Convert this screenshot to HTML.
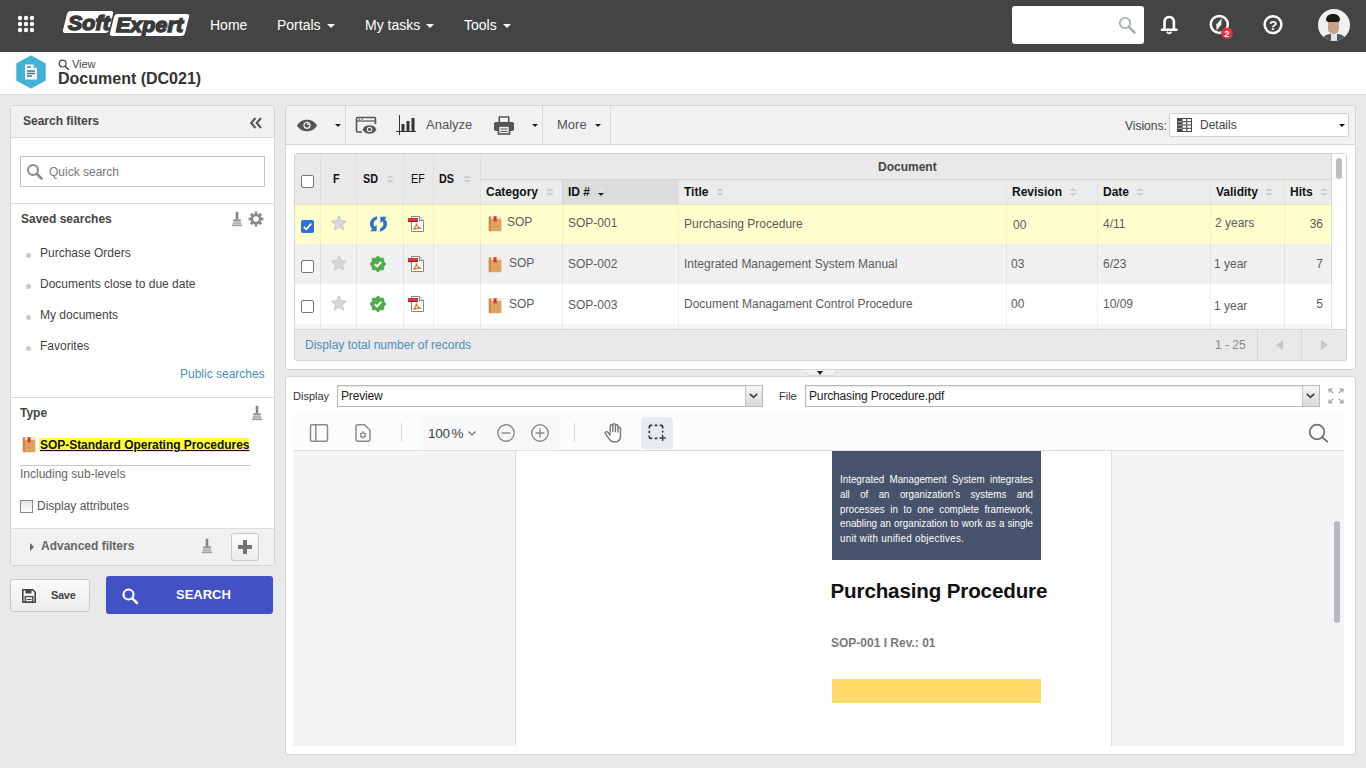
<!DOCTYPE html>
<html lang="en">
<head>
<meta charset="utf-8">
<title>Document (DC021)</title>
<style>
*{box-sizing:border-box;margin:0;padding:0}
html,body{width:1366px;height:768px;overflow:hidden}
body{background:#e9e9e9;font-family:"Liberation Sans",Arial,sans-serif;font-size:12px;color:#444;position:relative}
.abs{position:absolute}
.t{position:absolute;white-space:nowrap;line-height:1}
/* navbar */
#nav{position:absolute;left:0;top:0;width:1366px;height:52px;background:#444}
#nav .m{position:absolute;top:17px;color:#fff;font-size:14px;line-height:17px;white-space:nowrap}
.caret{display:inline-block;width:0;height:0;border-left:4px solid transparent;border-right:4px solid transparent;border-top:4px solid #fff;vertical-align:middle;margin-left:6px;position:relative;top:0px}
#hdr{position:absolute;left:0;top:52px;width:1366px;height:43px;background:#fff;border-bottom:1px solid #ddd}
/* panels */
.panel{position:absolute;background:#fff;border:1px solid #d4d4d4;border-radius:3px}
.hbar{position:absolute;background:#f1f1f1}
.b{font-weight:bold}
.lg{font-size:20px;line-height:22px;font-weight:bold;font-style:italic;color:#3a3a3a;letter-spacing:0.2px;-webkit-text-stroke:1.5px #3a3a3a;paint-order:stroke fill;transform-origin:0 50%;transform:scaleX(1.06)}
.pj{width:220.6px;font-size:11.2px;transform-origin:0 0;transform:scaleX(0.875);line-height:15px;color:#fff;text-align:justify;text-align-last:justify;white-space:nowrap}
.cd{width:0;height:0;border-left:3px solid transparent;border-right:3px solid transparent;border-top:3.5px solid #222}
.su{width:0;height:0;border-left:4px solid transparent;border-right:4px solid transparent;border-bottom:3.5px solid #cdcdcd}
.sd{width:0;height:0;border-left:4px solid transparent;border-right:4px solid transparent;border-top:3.5px solid #cdcdcd}
.cb{width:13px;height:13px;border:1px solid #767676;border-radius:2px;background:#fff}
.hd{font-size:12px;color:#111}
.nr{transform-origin:0 50%;transform:scaleX(0.9)}
.rt{font-size:12px;color:#5c5c5c}
.dot{width:5px;height:5px;margin:-0.5px 0 0 -0.5px;border-radius:50%;background:#c8c8c8}
</style>
</head>
<body>
<!-- NAVBAR -->
<div id="nav">
  <svg class="abs" style="left:17px;top:15px" width="18" height="18" viewBox="0 0 18 18">
    <g fill="#fff"><circle cx="3" cy="3" r="2.2"/><circle cx="9" cy="3" r="2.2"/><circle cx="15" cy="3" r="2.2"/><circle cx="3" cy="9" r="2.2"/><circle cx="9" cy="9" r="2.2"/><circle cx="15" cy="9" r="2.2"/><circle cx="3" cy="15" r="2.2"/><circle cx="9" cy="15" r="2.2"/><circle cx="15" cy="15" r="2.2"/></g>
  </svg>
  <!-- logo -->
  <div class="abs" style="left:65px;top:11px;width:46px;height:22px;background:#fff;border-radius:3px;transform:skewX(-14deg)"></div>
  <div class="abs" style="left:112px;top:14px;width:75px;height:22px;background:#fff;border-radius:3px;transform:skewX(-14deg)"></div>
  <div class="t lg" style="left:68px;top:12px">Soft</div>
  <div class="t lg" style="left:116px;top:14px">Expert</div>
  <div class="m" style="left:210px">Home</div>
  <div class="m" style="left:277px">Portals<span class="caret"></span></div>
  <div class="m" style="left:365px">My tasks<span class="caret"></span></div>
  <div class="m" style="left:464px">Tools<span class="caret"></span></div>
  <!-- search -->
  <div class="abs" style="left:1012px;top:6px;width:132px;height:38px;background:#fff;border-radius:3px"></div>
  <svg class="abs" style="left:1117px;top:15px" width="20" height="20" viewBox="0 0 20 20"><circle cx="8" cy="8" r="5.2" fill="none" stroke="#a9b2b0" stroke-width="1.8"/><path d="M12 12 L17.5 17.5" stroke="#a9b2b0" stroke-width="2.6" stroke-linecap="round"/></svg>
  <!-- bell -->
  <svg class="abs" style="left:1158px;top:13px" width="22" height="24" viewBox="0 0 22 24"><path d="M6.5 16.5 V9.6 C6.5 6 8.3 4 11.2 4 C14.1 4 15.9 6 15.9 9.6 V16.5" fill="none" stroke="#fff" stroke-width="2.6"/><path d="M3.9 16.7 H18.5" stroke="#fff" stroke-width="2.5" stroke-linecap="round"/><path d="M8.9 18.8 Q11.2 22 13.5 18.8" fill="none" stroke="#fff" stroke-width="1.9"/></svg>
  <!-- compass -->
  <svg class="abs" style="left:1207px;top:13px" width="30" height="30" viewBox="0 0 30 30"><circle cx="12.3" cy="11.4" r="8.5" fill="none" stroke="#fff" stroke-width="2.5"/><path d="M15 5.2 L9.3 11.6 L9.6 17.6 L14 12 Z" fill="#fff"/><path d="M15 5.2 L14 12 L9.6 17.6 L15.2 11.8 Z" fill="#777"/><circle cx="20" cy="20.3" r="5.9" fill="#e0343c"/></svg>
  <div class="t" style="left:1223px;top:28.5px;font-size:9.5px;font-weight:bold;color:#fff;width:8px;text-align:center">2</div>
  <!-- help -->
  <svg class="abs" style="left:1261px;top:13px" width="24" height="24" viewBox="0 0 24 24"><circle cx="12" cy="11.6" r="8.4" fill="none" stroke="#fff" stroke-width="2.5"/></svg>
  <div class="t" style="left:1268px;top:18.5px;font-size:13.5px;font-weight:bold;color:#fff;width:10px;text-align:center">?</div>
  <!-- avatar -->
  <div class="abs" style="left:1318px;top:9px;width:32px;height:32px;border-radius:50%;background:#f0f0f0;overflow:hidden">
    <div class="abs" style="left:3px;top:25px;width:26px;height:12px;background:#4e555a;border-radius:9px 9px 0 0"></div>
    <div class="abs" style="left:13px;top:24px;width:6px;height:9px;background:#e6e6e6"></div>
    <div class="abs" style="left:10px;top:8px;width:11px;height:17px;background:#c9a088;border-radius:5px 5px 6px 6px"></div>
    <div class="abs" style="left:8px;top:4.5px;width:14px;height:8px;background:#1c1917;border-radius:7px 7px 3px 3px"></div>
  </div>
</div>

<!-- HEADER -->
<div id="hdr"></div>
<svg class="abs" style="left:14.4px;top:54.4px" width="34" height="36" viewBox="0 0 34 36"><path d="M17 2.8 L30.4 10.2 L30.4 25.8 L17 33.2 L3.6 25.8 L3.6 10.2 Z" fill="#43b1d5" stroke="#43b1d5" stroke-width="2.6" stroke-linejoin="round"/><path d="M11 10.5 H19.5 L23 14 V25.5 H11 Z" fill="#fff"/><path d="M19.5 10.5 V14 H23 Z" fill="#43b1d5"/><path d="M13 17 H21 M13 19.5 H21 M13 22 H18" stroke="#3b6f8c" stroke-width="1.3"/><path d="M13 13 H17" stroke="#3b6f8c" stroke-width="1.3"/></svg>
<svg class="abs" style="left:58px;top:59px" width="12" height="12" viewBox="0 0 12 12"><circle cx="4.6" cy="4.6" r="3.4" fill="none" stroke="#444" stroke-width="1.2"/><path d="M7.2 7.2 L10.8 10.8" stroke="#444" stroke-width="1.4"/></svg>
<div class="t" style="left:72px;top:59px;font-size:11px;color:#484848;letter-spacing:-0.1px">View</div>
<div class="t b" style="left:58px;top:71px;font-size:16px;color:#333">Document (DC021)</div>

<!-- LEFT PANEL -->

<div class="panel" style="left:10px;top:105px;width:265px;height:461px"></div>
<div class="hbar" style="left:11px;top:106px;width:263px;height:32px;border-bottom:1px solid #d9d9d9;border-radius:3px 3px 0 0"></div>
<div class="t b" style="left:23px;top:115px;font-size:12px;color:#444">Search filters</div>
<svg class="abs" style="left:249px;top:117px" width="14" height="12" viewBox="0 0 14 12"><path d="M6.5 1 L2.2 6 L6.5 11 M12 1 L7.7 6 L12 11" fill="none" stroke="#555" stroke-width="2.1"/></svg>
<!-- quick search -->
<div class="abs" style="left:20px;top:156px;width:245px;height:31px;border:1px solid #c4c4c4;background:#fff"></div>
<svg class="abs" style="left:26px;top:163px" width="18" height="18" viewBox="0 0 18 18"><circle cx="7" cy="7" r="5" fill="none" stroke="#8a8a8a" stroke-width="2"/><path d="M10.8 10.8 L15.5 15.5" stroke="#8a8a8a" stroke-width="2.6" stroke-linecap="round"/></svg>
<div class="t" style="left:49px;top:166px;font-size:12px;color:#777">Quick search</div>
<div class="abs" style="left:11px;top:203px;width:263px;height:1px;background:#dcdcdc"></div>
<div class="t b" style="left:21px;top:213px;font-size:12px;color:#444">Saved searches</div>
<!-- broom + gear -->
<svg class="abs" style="left:231px;top:211px" width="12" height="16" viewBox="0 0 12 16"><path d="M4.7 0.8 H7.3 V8.5 H4.7 Z" fill="#838383"/><path d="M2.2 8.3 H9.8 V10.2 H2.2 Z" fill="#929292"/><path d="M2.2 10.2 H9.8 L10.8 14 H1.2 Z" fill="#c4c4c4"/><path d="M2 12 H10" stroke="#a5a5a5" stroke-width="0.9"/><path d="M0.8 14.6 H11.2" stroke="#9a9a9a" stroke-width="1.1"/></svg>
<svg class="abs" style="left:248px;top:211px" width="16" height="16" viewBox="0 0 16 16"><g fill="#8a8a8a"><circle cx="8" cy="8" r="5.3"/><rect x="6.6" y="0.6" width="2.8" height="14.8" rx="0.6" transform="rotate(0 8 8)"/><rect x="6.6" y="0.6" width="2.8" height="14.8" rx="0.6" transform="rotate(45 8 8)"/><rect x="6.6" y="0.6" width="2.8" height="14.8" rx="0.6" transform="rotate(90 8 8)"/><rect x="6.6" y="0.6" width="2.8" height="14.8" rx="0.6" transform="rotate(135 8 8)"/></g><circle cx="8" cy="8" r="2.8" fill="#fff"/></svg>
<div class="abs dot" style="left:26px;top:253px"></div>
<div class="t" style="left:40px;top:247px;font-size:12px;color:#444">Purchase Orders</div>
<div class="abs dot" style="left:26px;top:284px"></div>
<div class="t" style="left:40px;top:278px;font-size:12px;color:#444">Documents close to due date</div>
<div class="abs dot" style="left:26px;top:315px"></div>
<div class="t" style="left:40px;top:309px;font-size:12px;color:#444">My documents</div>
<div class="abs dot" style="left:26px;top:346px"></div>
<div class="t" style="left:40px;top:340px;font-size:12px;color:#444">Favorites</div>
<div class="t" style="left:180px;top:368px;font-size:12px;color:#4b8fb3">Public searches</div>
<div class="abs" style="left:11px;top:397px;width:263px;height:1px;background:#dcdcdc"></div>
<div class="t b" style="left:20px;top:407px;font-size:12px;color:#444">Type</div>
<svg class="abs" style="left:251px;top:405px" width="12" height="16" viewBox="0 0 12 16"><path d="M4.7 0.8 H7.3 V8.5 H4.7 Z" fill="#838383"/><path d="M2.2 8.3 H9.8 V10.2 H2.2 Z" fill="#929292"/><path d="M2.2 10.2 H9.8 L10.8 14 H1.2 Z" fill="#c4c4c4"/><path d="M2 12 H10" stroke="#a5a5a5" stroke-width="0.9"/><path d="M0.8 14.6 H11.2" stroke="#9a9a9a" stroke-width="1.1"/></svg>
<svg class="abs" style="left:21.7px;top:436.2px" width="14" height="17" viewBox="0 0 14 17"><rect x="0.8" y="1.2" width="12.6" height="15" rx="1.5" fill="#dfa463"/><rect x="2.5" y="1.2" width="10.9" height="2.6" fill="#f6ead6"/><rect x="0.8" y="1.2" width="2.2" height="15" rx="1" fill="#c98b45"/><path d="M5.6 1.2 H8.6 V7.2 L7.1 6 L5.6 7.2 Z" fill="#d8352f"/><circle cx="6.5" cy="11.5" r="0.6" fill="#b77a38"/><circle cx="10" cy="11.5" r="0.6" fill="#b77a38"/></svg>
<div class="t b" style="left:39px;top:438px;font-size:12px;color:#111;background:#ffff33;text-decoration:underline;line-height:14px;padding:0 0 0 1px;letter-spacing:-0.04px">SOP-Standard Operating Procedures</div>
<div class="abs" style="left:20px;top:465px;width:231px;height:1px;background:#c8c8c8"></div>
<div class="t" style="left:20px;top:468px;font-size:12px;color:#666">Including sub-levels</div>
<div class="abs" style="left:20px;top:500px;width:13px;height:13px;border:1px solid #8a8a8a;background:linear-gradient(#e4e4e4,#fdfdfd)"></div>
<div class="t" style="left:37px;top:500px;font-size:12px;color:#555">Display attributes</div>
<div class="hbar" style="left:11px;top:528px;width:263px;height:37px;border-top:1px solid #dcdcdc;border-radius:0 0 3px 3px"></div>
<div class="abs" style="left:30px;top:542.5px;width:0;height:0;border-top:4.5px solid transparent;border-bottom:4.5px solid transparent;border-left:4.5px solid #666"></div>
<div class="t b" style="left:41px;top:540px;font-size:12px;color:#666">Advanced filters</div>
<svg class="abs" style="left:201px;top:538px" width="12" height="16" viewBox="0 0 12 16"><path d="M4.7 0.8 H7.3 V8.5 H4.7 Z" fill="#838383"/><path d="M2.2 8.3 H9.8 V10.2 H2.2 Z" fill="#929292"/><path d="M2.2 10.2 H9.8 L10.8 14 H1.2 Z" fill="#c4c4c4"/><path d="M2 12 H10" stroke="#a5a5a5" stroke-width="0.9"/><path d="M0.8 14.6 H11.2" stroke="#9a9a9a" stroke-width="1.1"/></svg>
<div class="abs" style="left:231px;top:533px;width:28px;height:28px;border:1px solid #c8c8c8;border-radius:3px;background:linear-gradient(#fbfbfb,#ececec)"></div>
<div class="abs" style="left:238px;top:545px;width:14px;height:4px;background:#737373"></div>
<div class="abs" style="left:243px;top:540px;width:4px;height:14px;background:#737373"></div>
<!-- save -->
<div class="abs" style="left:10px;top:579px;width:80px;height:33px;border:1px solid #c9c9c9;border-radius:3px;background:linear-gradient(#fbfbfb,#ececec)"></div>
<svg class="abs" style="left:21px;top:588px" width="16" height="16" viewBox="0 0 16 16"><path d="M1.8 1.8 H11.8 L14.2 4.2 V14.2 H1.8 Z" fill="none" stroke="#444" stroke-width="1.6" stroke-linejoin="round"/><rect x="4.5" y="1.8" width="6" height="3.6" fill="#444"/><rect x="4.2" y="8.6" width="7.6" height="5.6" fill="none" stroke="#444" stroke-width="1.3"/><path d="M5.5 11.5 H10.5" stroke="#444" stroke-width="1"/></svg>
<div class="t b" style="left:51px;top:590px;font-size:11px;color:#444;letter-spacing:-0.3px">Save</div>
<!-- search btn -->
<div class="abs" style="left:106px;top:576px;width:167px;height:38px;background:#4251c4;border-radius:3px"></div>
<svg class="abs" style="left:121px;top:587px" width="18" height="18" viewBox="0 0 18 18"><circle cx="7.5" cy="7.5" r="5" fill="none" stroke="#fff" stroke-width="2.2"/><path d="M11.3 11.3 L16 16" stroke="#fff" stroke-width="2.6" stroke-linecap="round"/></svg>
<div class="t b" style="left:176px;top:588px;font-size:13px;color:#fff">SEARCH</div>

<!-- RIGHT TOP -->

<div class="panel" style="left:285px;top:105px;width:1071px;height:265px"></div>
<div class="hbar" style="left:286px;top:106px;width:1069px;height:39px;border-bottom:1px solid #d4d4d4;border-radius:3px 3px 0 0"></div>
<div class="abs" style="left:345px;top:106px;width:1px;height:38px;background:#dadada"></div>
<div class="abs" style="left:542px;top:106px;width:1px;height:38px;background:#dadada"></div>
<div class="abs" style="left:610px;top:106px;width:1px;height:38px;background:#dadada"></div>
<!-- eye -->
<svg class="abs" style="left:296px;top:119px" width="22" height="13" viewBox="0 0 22 13"><path d="M1 6.5 C4 1.5 8 0.8 11 0.8 C14 0.8 18 1.5 21 6.5 C18 11.5 14 12.2 11 12.2 C8 12.2 4 11.5 1 6.5 Z" fill="#555"/><circle cx="11" cy="6.3" r="3.6" fill="#f1f1f1"/><circle cx="11" cy="6.3" r="2.3" fill="#555"/><circle cx="12" cy="5.2" r="1" fill="#f1f1f1"/></svg>
<div class="abs cd" style="left:334.5px;top:124px"></div>
<!-- window eye -->
<svg class="abs" style="left:355px;top:116px" width="22" height="19" viewBox="0 0 22 19"><path d="M7 16 H2.5 Q1.5 16 1.5 15 V2.5 Q1.5 1.5 2.5 1.5 H19.5 Q20.5 1.5 20.5 2.5 V8" fill="none" stroke="#555" stroke-width="1.6"/><path d="M1.5 5 H20.5" stroke="#555" stroke-width="1.2"/><path d="M3.5 3.2 H5 M6.5 3.2 H8" stroke="#555" stroke-width="1"/><path d="M7.5 13.5 C9.5 10 12 9.3 14.5 9.3 C17 9.3 19.5 10 21.5 13.5 C19.5 17 17 17.7 14.5 17.7 C12 17.7 9.5 17 7.5 13.5 Z" fill="#555"/><circle cx="14.5" cy="13.4" r="2.7" fill="#f1f1f1"/><circle cx="14.5" cy="13.4" r="1.6" fill="#555"/></svg>
<!-- bars -->
<svg class="abs" style="left:395px;top:114px" width="22" height="22" viewBox="0 0 22 22"><path d="M4.5 1 V21" stroke="#333" stroke-width="1"/><path d="M1 17.5 H21" stroke="#333" stroke-width="1"/><rect x="6.5" y="10" width="3" height="7.5" fill="#333"/><rect x="11.5" y="7" width="3" height="10.5" fill="#333"/><rect x="16.5" y="4" width="3" height="13.5" fill="#333"/></svg>
<div class="t" style="left:426px;top:118px;font-size:13px;color:#555">Analyze</div>
<!-- printer -->
<svg class="abs" style="left:493px;top:115px" width="22" height="20" viewBox="0 0 22 20"><rect x="6.3" y="2" width="9.4" height="6" fill="#f6f6f6" stroke="#555" stroke-width="1.5"/><rect x="1" y="7" width="20" height="9" rx="1.8" fill="#555"/><rect x="5.5" y="11" width="11" height="8" fill="#f1f1f1" stroke="#555" stroke-width="1.6"/><path d="M7.5 14 H14.5 M7.5 16.5 H14.5" stroke="#555" stroke-width="1"/></svg>
<div class="abs cd" style="left:531.5px;top:124px"></div>
<div class="t" style="left:557px;top:118px;font-size:13px;color:#555">More</div>
<div class="abs cd" style="left:595px;top:124px"></div>
<!-- visions -->
<div class="t" style="left:1125px;top:120px;font-size:12px;color:#444">Visions:</div>
<div class="abs" style="left:1169px;top:113px;width:180px;height:24px;background:#fff;border:1px solid #d0d0d0;border-radius:2px"></div>
<svg class="abs" style="left:1177px;top:118px" width="15" height="14" viewBox="0 0 15 14"><rect x="0.5" y="0.5" width="14" height="13" fill="#fff" stroke="#444" stroke-width="1"/><path d="M0.5 3.7 H14.5 M0.5 7 H14.5 M0.5 10.3 H14.5 M5 0.5 V13.5 M9.7 0.5 V13.5" stroke="#444" stroke-width="1"/><rect x="0.5" y="0.5" width="4.5" height="13" fill="#444"/><path d="M0.5 3.7 H5 M0.5 7 H5 M0.5 10.3 H5" stroke="#ddd" stroke-width="0.8"/></svg>
<div class="t" style="left:1200px;top:119px;font-size:12px;color:#444">Details</div>
<div class="abs cd" style="left:1339px;top:124px;border-top-color:#111;border-left-width:3px;border-right-width:3px"></div>

<!-- GRID -->
<div class="abs" style="left:294px;top:153px;width:1053px;height:208px;border:1px solid #d2d2d2;border-radius:3px;background:#fff;overflow:hidden"></div>
<div class="abs" style="left:295px;top:154px;width:1037px;height:50px;background:#e9e9e9"></div>
<div class="abs" style="left:480px;top:179px;width:852px;height:1px;background:#d6d6d6"></div>
<div class="abs" style="left:480px;top:180px;width:852px;height:24px;background:#ececec"></div>
<div class="abs" style="left:562px;top:180px;width:116px;height:24px;background:#dcdcdc"></div>
<!-- rows -->
<div class="abs" style="left:295px;top:204px;width:1037px;height:40px;background:#ffffce"></div>
<div class="abs" style="left:295px;top:244px;width:1037px;height:40px;background:#f0f0f0"></div>
<div class="abs" style="left:295px;top:284px;width:1037px;height:40px;background:#fff"></div>
<div class="abs" style="left:295px;top:324px;width:1037px;height:5px;background:#f5f5f5"></div>
<div class="abs" style="left:295px;top:204px;width:1037px;height:1px;background:rgba(0,0,0,0.09)"></div>
<!-- col lines -->
<div class="abs" style="left:320px;top:154px;width:1px;height:50px;background:rgba(0,0,0,0.04)"></div><div class="abs" style="left:320px;top:204px;width:1px;height:125px;background:rgba(0,0,0,0.055)"></div><div class="abs" style="left:356px;top:154px;width:1px;height:50px;background:rgba(0,0,0,0.04)"></div><div class="abs" style="left:356px;top:204px;width:1px;height:125px;background:rgba(0,0,0,0.055)"></div><div class="abs" style="left:403px;top:154px;width:1px;height:50px;background:rgba(0,0,0,0.04)"></div><div class="abs" style="left:403px;top:204px;width:1px;height:125px;background:rgba(0,0,0,0.055)"></div><div class="abs" style="left:433px;top:154px;width:1px;height:50px;background:rgba(0,0,0,0.04)"></div><div class="abs" style="left:433px;top:204px;width:1px;height:125px;background:rgba(0,0,0,0.055)"></div><div class="abs" style="left:480px;top:154px;width:1px;height:50px;background:rgba(0,0,0,0.04)"></div><div class="abs" style="left:480px;top:204px;width:1px;height:125px;background:rgba(0,0,0,0.055)"></div><div class="abs" style="left:562px;top:180px;width:1px;height:24px;background:rgba(0,0,0,0.04)"></div><div class="abs" style="left:562px;top:204px;width:1px;height:125px;background:rgba(0,0,0,0.055)"></div><div class="abs" style="left:678px;top:180px;width:1px;height:24px;background:rgba(0,0,0,0.04)"></div><div class="abs" style="left:678px;top:204px;width:1px;height:125px;background:rgba(0,0,0,0.055)"></div><div class="abs" style="left:1006px;top:180px;width:1px;height:24px;background:rgba(0,0,0,0.04)"></div><div class="abs" style="left:1006px;top:204px;width:1px;height:125px;background:rgba(0,0,0,0.055)"></div><div class="abs" style="left:1097px;top:180px;width:1px;height:24px;background:rgba(0,0,0,0.04)"></div><div class="abs" style="left:1097px;top:204px;width:1px;height:125px;background:rgba(0,0,0,0.055)"></div><div class="abs" style="left:1210px;top:180px;width:1px;height:24px;background:rgba(0,0,0,0.04)"></div><div class="abs" style="left:1210px;top:204px;width:1px;height:125px;background:rgba(0,0,0,0.055)"></div><div class="abs" style="left:1284px;top:180px;width:1px;height:24px;background:rgba(0,0,0,0.04)"></div><div class="abs" style="left:1284px;top:204px;width:1px;height:125px;background:rgba(0,0,0,0.055)"></div><div class="abs" style="left:1331px;top:154px;width:1px;height:175px;background:rgba(0,0,0,0.09)"></div>
<!-- scrollbar -->
<div class="abs" style="left:1332px;top:154px;width:14px;height:175px;background:#fff"></div>
<div class="abs" style="left:1336px;top:158px;width:6px;height:21px;border-radius:3px;background:#bebec2"></div>
<!-- footer -->
<div class="abs" style="left:295px;top:329px;width:1051px;height:31px;background:#e9e9e9;border-top:1px solid #d6d6d6"></div>
<div class="t" style="left:305px;top:339px;font-size:12px;color:#4d8dc0">Display total number of records</div>
<div class="t" style="left:1215px;top:339px;font-size:12px;color:#888">1 - 25</div>
<div class="abs" style="left:1257px;top:330px;width:1px;height:30px;background:#d6d6d6"></div>
<div class="abs" style="left:1301px;top:330px;width:1px;height:30px;background:#d6d6d6"></div>
<div class="abs" style="left:1275.5px;top:340px;width:0;height:0;border-top:5px solid transparent;border-bottom:5px solid transparent;border-right:7px solid #c6c6c6"></div>
<div class="abs" style="left:1321px;top:340px;width:0;height:0;border-top:5px solid transparent;border-bottom:5px solid transparent;border-left:7px solid #c6c6c6"></div>
<!-- header labels -->
<div class="abs cb" style="left:301px;top:175px"></div>
<div class="t b hd nr" style="left:333px;top:173px">F</div>
<div class="t b hd nr" style="left:363px;top:173px">SD</div><div class="abs su" style="left:386px;top:175px"></div><div class="abs sd" style="left:386px;top:180px"></div>
<div class="t b hd nr" style="left:411px;top:173px;font-weight:normal">EF</div>
<div class="t b hd nr" style="left:439px;top:173px">DS</div><div class="abs su" style="left:463px;top:175px"></div><div class="abs sd" style="left:463px;top:180px"></div>
<div class="t b" style="left:878px;top:161px;font-size:12px;color:#444">Document</div>
<div class="t b hd" style="left:486px;top:186px">Category</div><div class="abs su" style="left:546px;top:188px"></div><div class="abs sd" style="left:546px;top:193px"></div>
<div class="t b hd" style="left:568px;top:186px">ID #</div>
<div class="abs" style="left:597.5px;top:192.5px;width:0;height:0;border-left:3.7px solid transparent;border-right:3.7px solid transparent;border-top:3.5px solid #222"></div><div class="abs" style="left:597.5px;top:187.5px;width:0;height:0;border-left:3.7px solid transparent;border-right:3.7px solid transparent;border-bottom:3.5px solid #e6e6e6"></div>
<div class="t b hd" style="left:684px;top:186px">Title</div><div class="abs su" style="left:715.5px;top:188px"></div><div class="abs sd" style="left:715.5px;top:193px"></div>
<div class="t b hd" style="left:1012px;top:186px">Revision</div><div class="abs su" style="left:1069px;top:188px"></div><div class="abs sd" style="left:1069px;top:193px"></div>
<div class="t b hd" style="left:1103px;top:186px">Date</div><div class="abs su" style="left:1136px;top:188px"></div><div class="abs sd" style="left:1136px;top:193px"></div>
<div class="t b hd" style="left:1216px;top:186px">Validity</div><div class="abs su" style="left:1265px;top:188px"></div><div class="abs sd" style="left:1265px;top:193px"></div>
<div class="t b hd" style="left:1290px;top:186px">Hits</div><div class="abs su" style="left:1320px;top:188px"></div><div class="abs sd" style="left:1320px;top:193px"></div>
<div class="abs" style="left:301px;top:220px;width:13px;height:13px;background:#2f6fd6;border-radius:2px"></div><svg class="abs" style="left:301px;top:220px" width="13" height="13" viewBox="0 0 13 13"><path d="M2.8 6.8 L5.3 9.3 L10.2 3.6" fill="none" stroke="#fff" stroke-width="1.8"/></svg><svg class="abs" style="left:331px;top:215px" width="16" height="16" viewBox="0 0 16 16"><path d="M8 0.8 L10.2 5.6 L15.4 6.2 L11.5 9.8 L12.6 15 L8 12.3 L3.4 15 L4.5 9.8 L0.6 6.2 L5.8 5.6 Z" fill="#d8d8d8" stroke="#c2c2c2" stroke-width="0.8"/></svg><svg class="abs" style="left:369.5px;top:215.5px" width="17" height="16" viewBox="0 0 17 16"><g fill="#2f72c8"><path d="M7 0.3 C-1 2.5 -1.5 9.5 2.2 13 L0.2 15.3 H6.6 V8.7 L4.6 10.7 C2.8 8.5 3.3 5 7 3.6 Z"/><path d="M10 15.7 C18 13.5 18.5 6.5 14.8 3 L16.8 0.7 H10.4 V7.3 L12.4 5.3 C14.2 7.5 13.7 11 10 12.4 Z"/></g></svg><svg class="abs" style="left:407px;top:215px" width="18" height="18" viewBox="0 0 18 18"><path d="M4.5 1.5 H12.5 L16.5 5.5 V16.5 H4.5 Z" fill="#fff" stroke="#8a8a8a" stroke-width="1"/><path d="M12.5 1.5 V5.5 H16.5" fill="#e6e6e6" stroke="#8a8a8a" stroke-width="1"/><rect x="1" y="3" width="10" height="3.4" fill="#d9363a"/><rect x="1" y="6.2" width="10" height="0.9" fill="#5a1412"/><path d="M6.5 14.5 C8.5 12.5 9.5 10 9.3 8.3 C10 11 12 13 14.5 13.2 C12 13 9 13.5 6.5 14.5 Z" fill="none" stroke="#e0772a" stroke-width="1.1"/></svg><svg class="abs" style="left:488px;top:214.5px" width="14" height="17" viewBox="0 0 14 17"><rect x="0.8" y="1.2" width="12.6" height="15" rx="1.5" fill="#dfa463"/><rect x="2.5" y="1.2" width="10.9" height="2.6" fill="#f6ead6"/><rect x="0.8" y="1.2" width="2.2" height="15" rx="1" fill="#c98b45"/><path d="M5.6 1.2 H8.6 V7.2 L7.1 6 L5.6 7.2 Z" fill="#d8352f"/><circle cx="6.5" cy="11.5" r="0.6" fill="#b77a38"/><circle cx="10" cy="11.5" r="0.6" fill="#b77a38"/></svg><div class="t rt" style="left:507px;top:216px">SOP</div><div class="t rt" style="left:568px;top:217px">SOP-001</div><div class="t rt" style="left:684px;top:218px">Purchasing Procedure</div><div class="t rt" style="left:1013px;top:219px">00</div><div class="t rt" style="left:1103px;top:218px">4/11</div><div class="t rt" style="left:1215px;top:217px">2 years</div><div class="t rt" style="left:1299px;top:218px;width:24px;text-align:right">36</div><div class="abs cb" style="left:301px;top:260px"></div><svg class="abs" style="left:331px;top:255px" width="16" height="16" viewBox="0 0 16 16"><path d="M8 0.8 L10.2 5.6 L15.4 6.2 L11.5 9.8 L12.6 15 L8 12.3 L3.4 15 L4.5 9.8 L0.6 6.2 L5.8 5.6 Z" fill="#d8d8d8" stroke="#c2c2c2" stroke-width="0.8"/></svg><svg class="abs" style="left:370px;top:256px" width="16" height="16" viewBox="0 0 16 16"><polygon points="8.00,0.00 10.41,2.18 13.66,2.34 13.82,5.59 16.00,8.00 13.82,10.41 13.66,13.66 10.41,13.82 8.00,16.00 5.59,13.82 2.34,13.66 2.18,10.41 0.00,8.00 2.18,5.59 2.34,2.34 5.59,2.18" fill="#4fae4a" stroke="#4fae4a" stroke-width="1" stroke-linejoin="round"/><path d="M4.8 8.2 L7.1 10.4 L11.2 5.9" fill="none" stroke="#fff" stroke-width="1.9"/></svg><svg class="abs" style="left:407px;top:255px" width="18" height="18" viewBox="0 0 18 18"><path d="M4.5 1.5 H12.5 L16.5 5.5 V16.5 H4.5 Z" fill="#fff" stroke="#8a8a8a" stroke-width="1"/><path d="M12.5 1.5 V5.5 H16.5" fill="#e6e6e6" stroke="#8a8a8a" stroke-width="1"/><rect x="1" y="3" width="10" height="3.4" fill="#d9363a"/><rect x="1" y="6.2" width="10" height="0.9" fill="#5a1412"/><path d="M6.5 14.5 C8.5 12.5 9.5 10 9.3 8.3 C10 11 12 13 14.5 13.2 C12 13 9 13.5 6.5 14.5 Z" fill="none" stroke="#e0772a" stroke-width="1.1"/></svg><svg class="abs" style="left:488px;top:255.5px" width="14" height="17" viewBox="0 0 14 17"><rect x="0.8" y="1.2" width="12.6" height="15" rx="1.5" fill="#dfa463"/><rect x="2.5" y="1.2" width="10.9" height="2.6" fill="#f6ead6"/><rect x="0.8" y="1.2" width="2.2" height="15" rx="1" fill="#c98b45"/><path d="M5.6 1.2 H8.6 V7.2 L7.1 6 L5.6 7.2 Z" fill="#d8352f"/><circle cx="6.5" cy="11.5" r="0.6" fill="#b77a38"/><circle cx="10" cy="11.5" r="0.6" fill="#b77a38"/></svg><div class="t rt" style="left:509px;top:257px">SOP</div><div class="t rt" style="left:568px;top:258px">SOP-002</div><div class="t rt" style="left:684px;top:258px">Integrated Management System Manual</div><div class="t rt" style="left:1011px;top:258px">03</div><div class="t rt" style="left:1103px;top:258px">6/23</div><div class="t rt" style="left:1214px;top:258px">1 year</div><div class="t rt" style="left:1299px;top:258px;width:24px;text-align:right">7</div><div class="abs cb" style="left:301px;top:300px"></div><svg class="abs" style="left:331px;top:295px" width="16" height="16" viewBox="0 0 16 16"><path d="M8 0.8 L10.2 5.6 L15.4 6.2 L11.5 9.8 L12.6 15 L8 12.3 L3.4 15 L4.5 9.8 L0.6 6.2 L5.8 5.6 Z" fill="#d8d8d8" stroke="#c2c2c2" stroke-width="0.8"/></svg><svg class="abs" style="left:370px;top:296px" width="16" height="16" viewBox="0 0 16 16"><polygon points="8.00,0.00 10.41,2.18 13.66,2.34 13.82,5.59 16.00,8.00 13.82,10.41 13.66,13.66 10.41,13.82 8.00,16.00 5.59,13.82 2.34,13.66 2.18,10.41 0.00,8.00 2.18,5.59 2.34,2.34 5.59,2.18" fill="#4fae4a" stroke="#4fae4a" stroke-width="1" stroke-linejoin="round"/><path d="M4.8 8.2 L7.1 10.4 L11.2 5.9" fill="none" stroke="#fff" stroke-width="1.9"/></svg><svg class="abs" style="left:407px;top:295px" width="18" height="18" viewBox="0 0 18 18"><path d="M4.5 1.5 H12.5 L16.5 5.5 V16.5 H4.5 Z" fill="#fff" stroke="#8a8a8a" stroke-width="1"/><path d="M12.5 1.5 V5.5 H16.5" fill="#e6e6e6" stroke="#8a8a8a" stroke-width="1"/><rect x="1" y="3" width="10" height="3.4" fill="#d9363a"/><rect x="1" y="6.2" width="10" height="0.9" fill="#5a1412"/><path d="M6.5 14.5 C8.5 12.5 9.5 10 9.3 8.3 C10 11 12 13 14.5 13.2 C12 13 9 13.5 6.5 14.5 Z" fill="none" stroke="#e0772a" stroke-width="1.1"/></svg><svg class="abs" style="left:488px;top:296.5px" width="14" height="17" viewBox="0 0 14 17"><rect x="0.8" y="1.2" width="12.6" height="15" rx="1.5" fill="#dfa463"/><rect x="2.5" y="1.2" width="10.9" height="2.6" fill="#f6ead6"/><rect x="0.8" y="1.2" width="2.2" height="15" rx="1" fill="#c98b45"/><path d="M5.6 1.2 H8.6 V7.2 L7.1 6 L5.6 7.2 Z" fill="#d8352f"/><circle cx="6.5" cy="11.5" r="0.6" fill="#b77a38"/><circle cx="10" cy="11.5" r="0.6" fill="#b77a38"/></svg><div class="t rt" style="left:509px;top:298px">SOP</div><div class="t rt" style="left:568px;top:299px">SOP-003</div><div class="t rt" style="left:684px;top:298px">Document Managament Control Procedure</div><div class="t rt" style="left:1011px;top:298px">00</div><div class="t rt" style="left:1103px;top:298px">10/09</div><div class="t rt" style="left:1214px;top:300px">1 year</div><div class="t rt" style="left:1299px;top:298px;width:24px;text-align:right">5</div>

<!-- RIGHT BOTTOM -->

<div class="panel" style="left:285px;top:376px;width:1071px;height:379px"></div>
<!-- splitter handle -->
<svg class="abs" style="left:803px;top:369px" width="36" height="8" viewBox="0 0 36 8"><path d="M1 0.5 L6 6.5 H30 L35 0.5 Z" fill="#f3f3f3" stroke="#dadada" stroke-width="1"/></svg>
<div class="abs" style="left:817px;top:371px;width:0;height:0;border-left:3.5px solid transparent;border-right:3.5px solid transparent;border-top:4px solid #222"></div>
<div class="t" style="left:293px;top:391px;font-size:11px;color:#333">Display</div>
<div class="abs" style="left:337px;top:385px;width:426px;height:22px;background:#fff;border:1px solid #b9b9b9;box-shadow:inset 0 1px 2px rgba(0,0,0,0.12)"></div>
<div class="t" style="left:341px;top:390px;font-size:12px;color:#222;letter-spacing:-0.15px">Preview</div>
<div class="abs" style="left:745px;top:386px;width:17px;height:20px;background:linear-gradient(#f6f6f6,#d9d9d9);border-left:1px solid #c4c4c4"></div>
<svg class="abs" style="left:748px;top:392px" width="11" height="8" viewBox="0 0 11 8"><path d="M1.8 1.8 L5.5 5.3 L9.2 1.8" fill="none" stroke="#444" stroke-width="1.8"/></svg>
<div class="t" style="left:779px;top:391px;font-size:11px;color:#333">File</div>
<div class="abs" style="left:805px;top:385px;width:515px;height:22px;background:#fff;border:1px solid #b9b9b9;box-shadow:inset 0 1px 2px rgba(0,0,0,0.12)"></div>
<div class="t" style="left:809px;top:390px;font-size:12px;color:#222;letter-spacing:-0.15px">Purchasing Procedure.pdf</div>
<div class="abs" style="left:1302px;top:386px;width:17px;height:20px;background:linear-gradient(#f6f6f6,#d9d9d9);border-left:1px solid #c4c4c4"></div>
<svg class="abs" style="left:1305px;top:392px" width="11" height="8" viewBox="0 0 11 8"><path d="M1.8 1.8 L5.5 5.3 L9.2 1.8" fill="none" stroke="#444" stroke-width="1.8"/></svg>
<!-- fullscreen icon -->
<svg class="abs" style="left:1328px;top:388px" width="16" height="16" viewBox="0 0 16 16"><g fill="none" stroke="#999" stroke-width="1.1"><path d="M1 4.5 V1 H4.5 M1 1 L5 5"/><path d="M15 4.5 V1 H11.5 M15 1 L11 5"/><path d="M1 11.5 V15 H4.5 M1 15 L5 11"/><path d="M15 11.5 V15 H11.5 M15 15 L11 11"/></g></svg>
<!-- pdf toolbar -->
<div class="abs" style="left:293px;top:414px;width:1051px;height:37px;background:#fbfcfc;border-bottom:1px solid #dcdee0"></div>
<div class="abs" style="left:420px;top:416px;width:140px;height:33px;background:#f6f8f9;border-radius:4px"></div>
<svg class="abs" style="left:309px;top:423px" width="20" height="20" viewBox="0 0 20 20"><rect x="1.5" y="1.8" width="17" height="16.4" rx="1.5" fill="none" stroke="#8a8a8a" stroke-width="1.5"/><path d="M6.8 1.8 V18.2" stroke="#8a8a8a" stroke-width="1.5"/></svg>
<svg class="abs" style="left:354px;top:423px" width="18" height="20" viewBox="0 0 18 20"><path d="M2 3.5 Q2 1.8 3.7 1.8 H10.5 L16 7.3 V16.5 Q16 18.2 14.3 18.2 H3.7 Q2 18.2 2 16.5 Z" fill="none" stroke="#8a8a8a" stroke-width="1.5" stroke-linejoin="round"/><circle cx="9" cy="12" r="2.2" fill="none" stroke="#8a8a8a" stroke-width="1.3"/><path d="M9 8.3 V9.5 M9 14.5 V15.7 M5.8 10.2 L6.9 10.8 M11.1 13.2 L12.2 13.8 M5.8 13.8 L6.9 13.2 M11.1 10.8 L12.2 10.2" stroke="#8a8a8a" stroke-width="1.3"/></svg>
<div class="abs" style="left:401px;top:423px;width:1px;height:19px;background:#d4d6d8"></div>
<div class="t" style="left:428px;top:426.7px;font-size:13.5px;color:#444;letter-spacing:-0.2px">100<span style="margin-left:1.5px">%</span></div>
<svg class="abs" style="left:467px;top:430px" width="10" height="7" viewBox="0 0 10 7"><path d="M1.5 1.5 L5 5 L8.5 1.5" fill="none" stroke="#666" stroke-width="1.1"/></svg>
<svg class="abs" style="left:496px;top:423px" width="20" height="20" viewBox="0 0 20 20"><circle cx="10" cy="10" r="8.2" fill="none" stroke="#8a8a8a" stroke-width="1.4"/><path d="M5.5 10 H14.5" stroke="#8a8a8a" stroke-width="1.4"/></svg>
<svg class="abs" style="left:530px;top:423px" width="20" height="20" viewBox="0 0 20 20"><circle cx="10" cy="10" r="8.2" fill="none" stroke="#8a8a8a" stroke-width="1.4"/><path d="M5.5 10 H14.5 M10 5.5 V14.5" stroke="#8a8a8a" stroke-width="1.4"/></svg>
<div class="abs" style="left:574px;top:423px;width:1px;height:19px;background:#d4d6d8"></div>
<!-- hand -->
<svg class="abs" style="left:603px;top:422px" width="21" height="22" viewBox="0 0 21 22"><path d="M7.2 11 V4.2 Q7.2 2.8 8.5 2.8 Q9.8 2.8 9.8 4.2 V9.5 V3 Q9.8 1.6 11.1 1.6 Q12.4 1.6 12.4 3 V9.5 V4 Q12.4 2.7 13.7 2.7 Q15 2.7 15 4 V10 V6.5 Q15 5.3 16.2 5.3 Q17.5 5.3 17.5 6.5 V13.5 Q17.5 20 11.8 20 Q8.3 20 6.4 17.3 L2.4 11.6 Q1.8 10.4 2.8 9.8 Q3.9 9.3 4.8 10.3 L7.2 13" fill="none" stroke="#777" stroke-width="1.4" stroke-linejoin="round" stroke-linecap="round"/></svg>
<!-- selection -->
<div class="abs" style="left:641px;top:417px;width:32px;height:32px;background:#e7ecee;border-radius:4px"></div>
<svg class="abs" style="left:647.5px;top:424px" width="19" height="18" viewBox="0 0 19 18"><g stroke="#3a3f44" stroke-width="1.7" fill="none"><path d="M1.3 4.6 V2.8 Q1.3 1.3 2.8 1.3 H4.2 M6.6 1.3 H9.4 M11.8 1.3 H13.2 Q14.7 1.3 14.7 2.8 V4.6 M14.7 6.8 V8.6 M1.3 6.8 V9.2 M1.3 11.4 V12.9 Q1.3 14.4 2.8 14.4 H4.2 M6.6 14.4 H9.4"/><path d="M14.6 10.8 V17 M11.5 13.9 H17.7" stroke-width="1.5"/></g></svg>
<!-- search -->
<svg class="abs" style="left:1308px;top:423px" width="21" height="20" viewBox="0 0 21 20"><circle cx="9" cy="9" r="7.3" fill="none" stroke="#6e6e6e" stroke-width="1.7"/><path d="M14.2 14.2 L19.3 18.6" stroke="#6e6e6e" stroke-width="1.8" stroke-linecap="round"/></svg>
<!-- viewer -->
<div class="abs" style="left:293px;top:451px;width:1051px;height:295px;background:#f2f4f5"></div>
<div class="abs" style="left:515px;top:451px;width:597px;height:295px;background:#fff;border-left:1px solid #dcdedf;border-right:1px solid #dcdedf"></div>
<div class="abs" style="left:832px;top:451px;width:209px;height:109px;background:#46536b"></div>
<div class="abs pj" style="left:840px;top:472.4px">Integrated Management System integrates</div>
<div class="abs pj" style="left:840px;top:487px">all of an organization&rsquo;s systems and</div>
<div class="abs pj" style="left:840px;top:501.6px">processes in to one complete framework,</div>
<div class="abs pj" style="left:840px;top:516.2px">enabling an organization to work as a single</div>
<div class="abs pj" style="left:840px;top:530.8px;text-align-last:left;letter-spacing:0.3px">unit with unified objectives.</div>
<div class="t b" style="left:830.5px;top:581px;font-size:20.6px;color:#111;letter-spacing:-0.15px">Purchasing Procedure</div>
<div class="t b" style="left:831px;top:637px;font-size:12px;color:#7a7a7a">SOP-001 I Rev.: 01</div>
<div class="abs" style="left:832px;top:679px;width:209px;height:24px;background:#fdd966"></div>
<div class="abs" style="left:1334px;top:521px;width:6px;height:102px;border-radius:3px;background:#b7b8bc"></div>

</body>
</html>
